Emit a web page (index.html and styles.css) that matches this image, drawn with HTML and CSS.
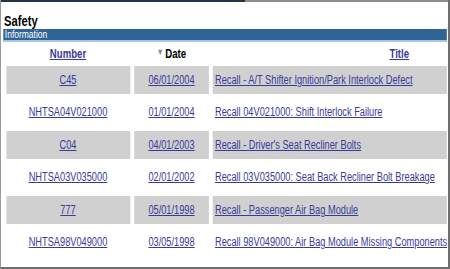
FILE: index.html
```html
<!DOCTYPE html>
<html>
<head>
<meta charset="utf-8">
<link rel="stylesheet" href="styles.css">
</head>
<body>
<div class="frame">
  <div class="topline"></div>
  <div class="canvas">
    <h1 class="title">Safety</h1>
    <div class="bar">Information</div>
    <div class="grid">
      <div class="row head">
        <div class="cell"><a href="#">Number</a></div>
        <div class="cell"><span class="sort">&#9660;</span>Date</div>
        <div class="cell right"><a href="#">Title</a></div>
      </div>
      <div class="row alt">
        <div class="cell"><a href="#">C45</a></div>
        <div class="cell"><a href="#">06/01/2004</a></div>
        <div class="cell left"><a href="#">Recall - A/T Shifter Ignition/Park Interlock Defect</a></div>
      </div>
      <div class="row">
        <div class="cell"><a href="#">NHTSA04V021000</a></div>
        <div class="cell"><a href="#">01/01/2004</a></div>
        <div class="cell left"><a href="#">Recall 04V021000: Shift Interlock Failure</a></div>
      </div>
      <div class="row alt">
        <div class="cell"><a href="#">C04</a></div>
        <div class="cell"><a href="#">04/01/2003</a></div>
        <div class="cell left"><a href="#">Recall - Driver's Seat Recliner Bolts</a></div>
      </div>
      <div class="row">
        <div class="cell"><a href="#">NHTSA03V035000</a></div>
        <div class="cell"><a href="#">02/01/2002</a></div>
        <div class="cell left"><a href="#">Recall 03V035000: Seat Back Recliner Bolt Breakage</a></div>
      </div>
      <div class="row alt">
        <div class="cell"><a href="#">777</a></div>
        <div class="cell"><a href="#">05/01/1998</a></div>
        <div class="cell left"><a href="#">Recall - Passenger Air Bag Module</a></div>
      </div>
      <div class="row">
        <div class="cell"><a href="#">NHTSA98V049000</a></div>
        <div class="cell"><a href="#">03/05/1998</a></div>
        <div class="cell left"><a href="#">Recall 98V049000: Air Bag Module Missing Components</a></div>
      </div>
    </div>
  </div>
</div>
</body>
</html>
```
FILE: styles.css
```css
html, body {
  margin: 0;
  padding: 0;
  background: #ffffff;
}
body {
  font-family: "Liberation Sans", Arial, sans-serif;
  font-size: 12px;
  color: #000;
}
.frame {
  box-sizing: border-box;
  width: 450px;
  height: 269px;
  border-left: 1px solid #9a9a9a;
  border-right: 2px solid #6e6e6e;
  border-bottom: 2px solid #6e6e6e;
  overflow: hidden;
}
.topline {
  height: 2px;
  margin-left: -1px;
  background: linear-gradient(to right, #22344a 0, #22344a 245px, #8c8c8c 245px, #8c8c8c 100%);
}
/* the reference is horizontally compressed; lay out wide, then squeeze */
.canvas {
  width: 579px;
  transform: scaleX(0.77);
  transform-origin: 0 0;
}
.title {
  margin: 0;
  padding: 11px 0 0 4px;
  height: 16px;
  font-size: 14.5px;
  line-height: 16px;
  font-weight: bold;
}
.bar {
  margin: 0 0 0 3px;
  height: 11px;
  line-height: 11px;
  background: #2f6596;
  color: #fff;
  font-size: 11px;
  padding-left: 2px;
  border-bottom: 2px solid #a9c6e4;
}
.grid {
  padding-left: 6.5px;
}
.row {
  display: grid;
  grid-template-columns: 161px 97.5px 1fr;
  column-gap: 5.2px;
  margin-top: 5px;
  height: 27.5px;
}
.row.head {
  height: 14px;
  line-height: 14px;
  font-weight: bold;
  font-size: 12.5px;
}
.cell {
  display: flex;
  align-items: center;
  justify-content: center;
  white-space: nowrap;
}
.cell.left {
  justify-content: flex-start;
  padding-left: 2.5px;
}
.cell.right {
  justify-content: flex-end;
  padding-right: 49px;
}
.row.alt .cell {
  background: #d0d0d0;
}
a {
  color: #3a3a99;
  text-decoration: underline;
}
.sort {
  color: #8a8a8a;
  font-size: 9px;
  margin-right: 2px;
  position: relative;
  top: -2px;
}
```
